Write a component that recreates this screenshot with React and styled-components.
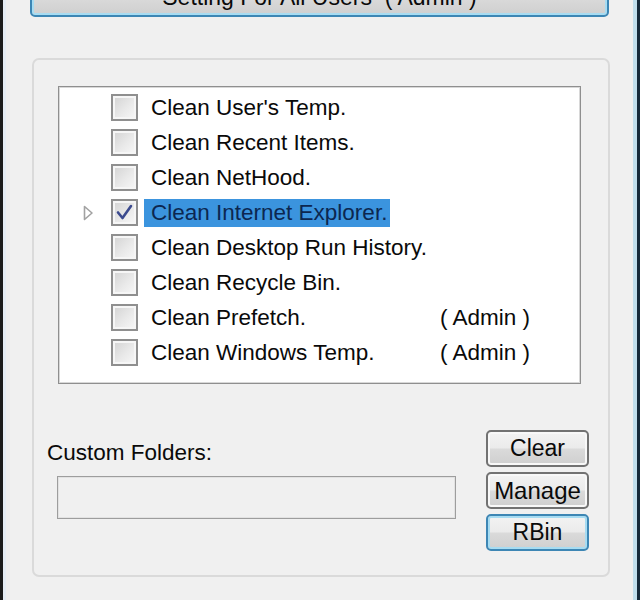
import React from "react";
import styled, { createGlobalStyle } from "styled-components";

const Global = createGlobalStyle`
  html, body { margin: 0; padding: 0; background: #f0f0f0; overflow: hidden; }
  body { font-family: "Liberation Sans", Arial, sans-serif; }
`;

const FONT = `"Liberation Sans", Arial, sans-serif`;

const Frame = styled.div`
  width: 640px;
  height: 600px;
  box-sizing: border-box;
  display: flex;
  border-left: 3px solid #1c1c1c;
  border-right: 3px solid #14293a;
  background: #f0f0f0;
  overflow: hidden;
`;

const Dialog = styled.div`
  flex: 1;
  display: flex;
  flex-direction: column;
  border-left: 3px solid #e6edf4;
  border-right: 4px solid #bfdeec;
  padding: 0 24px;
  font-family: ${FONT};
  font-size: 22.5px;
  color: #0a0a0a;
`;

const PushButton = styled.button`
  box-sizing: border-box;
  font-family: ${FONT};
  font-size: ${(p) => p.$size || 23}px;
  color: #0a0a0a;
  height: ${(p) => p.$h || 37}px;
  width: ${(p) => (p.$w ? `${p.$w}px` : "100%")};
  padding: 0;
  border-radius: 5px;
  border: 2px solid ${(p) => (p.$focus ? "#3d86b4" : "#727272")};
  background: linear-gradient(to bottom, #f3f3f3 0%, #ebebeb 48%, #dadada 52%, #cfcfcf 100%);
  box-shadow: inset 0 0 0 2px ${(p) => (p.$focus ? "#a7dcf2" : "#f8f8f8")};
  line-height: 1;
  display: flex;
  align-items: center;
  justify-content: center;
`;

const TopButton = styled(PushButton)`
  margin-top: -23px;
  height: 40px;
  flex: none;
`;

const Group = styled.div`
  margin: 41px -1px 0 2px;
  box-sizing: border-box;
  border: 2px solid #dadada;
  border-radius: 7px;
  padding: 26px 19px 24px 13px;
  display: flex;
  flex-direction: column;
`;

const ListBox = styled.div`
  margin: 0 8px 0 11px;
  height: 298px;
  box-sizing: border-box;
  background: #fff;
  border: 1px solid #8f8f8f;
  box-shadow: inset 0 0 0 1px #d8d8d8;
  padding: 3px 0 0 24px;
  display: flex;
  flex-direction: column;
`;

const Row = styled.div`
  height: 35px;
  display: flex;
  align-items: center;
`;

const Expander = styled.div`
  width: 28px;
  height: 35px;
  display: flex;
  align-items: center;
`;

const CheckBox = styled.div`
  width: 27px;
  height: 27px;
  box-sizing: border-box;
  border: 2px solid #8f8f8f;
  background: linear-gradient(135deg, #d2d2d2 0%, #e9e9e9 55%, #f8f8f8 100%);
  box-shadow: inset 0 0 0 2px #f6f6f6;
  display: flex;
  align-items: center;
  justify-content: center;
  flex: none;
`;

const LabelCell = styled.div`
  width: 296px;
  margin-left: 6px;
  flex: none;
`;

const Label = styled.span`
  display: inline-block;
  height: 28px;
  line-height: 28px;
  padding: 0 3px 0 7px;
  white-space: pre;
  background: ${(p) => (p.$selected ? "#3b94de" : "transparent")};
  color: ${(p) => (p.$selected ? "#0c2750" : "#0a0a0a")};
`;

const AdminTag = styled.span`
  white-space: pre;
  line-height: 28px;
`;

const Bottom = styled.div`
  margin-top: 46px;
  display: flex;
  justify-content: space-between;
  align-items: flex-start;
`;

const LeftCol = styled.div`
  padding-top: 8px;
  display: flex;
  flex-direction: column;
`;

const FieldLabel = styled.div`
  line-height: 30px;
`;

const TextBox = styled.div`
  margin: 8px 0 0 10px;
  width: 399px;
  height: 43px;
  box-sizing: border-box;
  border: 1px solid #9d9d9d;
  box-shadow: inset 0 0 0 1px #e2e2e2;
  background: #f0f0f0;
`;

const ButtonCol = styled.div`
  display: flex;
  flex-direction: column;
  gap: 5px;
`;

const items = [
  { text: "Clean User's Temp." },
  { text: "Clean Recent Items." },
  { text: "Clean NetHood." },
  { text: "Clean Internet Explorer.", checked: true, selected: true },
  { text: "Clean Desktop Run History." },
  { text: "Clean Recycle Bin." },
  { text: "Clean Prefetch.", admin: true },
  { text: "Clean Windows Temp.", admin: true },
];

const Triangle = () => (
  <svg width="11" height="16" viewBox="0 0 11 16">
    <path d="M1.5 1.5 L9 8 L1.5 14.5 Z" fill="#fff" stroke="#a2a2a2" strokeWidth="1.6" strokeLinejoin="round" />
  </svg>
);

const Check = () => (
  <svg width="19" height="19" viewBox="0 0 19 19">
    <path d="M3 9.5 L7.5 15 L16 3" fill="none" stroke="#3b4a8e" strokeWidth="2.6" strokeLinecap="round" strokeLinejoin="round" />
  </svg>
);

export default function App() {
  return (
    <>
      <Global />
      <Frame>
        <Dialog>
          <TopButton $focus>Setting For All Users&nbsp; ( Admin )</TopButton>
          <Group>
            <ListBox>
              {items.map((it) => (
                <Row key={it.text}>
                  <Expander>{it.selected && <Triangle />}</Expander>
                  <CheckBox>{it.checked && <Check />}</CheckBox>
                  <LabelCell>
                    <Label $selected={it.selected}>{it.text}</Label>
                  </LabelCell>
                  {it.admin && <AdminTag>( Admin )</AdminTag>}
                </Row>
              ))}
            </ListBox>
            <Bottom>
              <LeftCol>
                <FieldLabel>Custom Folders:</FieldLabel>
                <TextBox />
              </LeftCol>
              <ButtonCol>
                <PushButton $w={103}>Clear</PushButton>
                <PushButton $w={103} $size={24}>Manage</PushButton>
                <PushButton $w={103} $focus>RBin</PushButton>
              </ButtonCol>
            </Bottom>
          </Group>
        </Dialog>
      </Frame>
    </>
  );
}
